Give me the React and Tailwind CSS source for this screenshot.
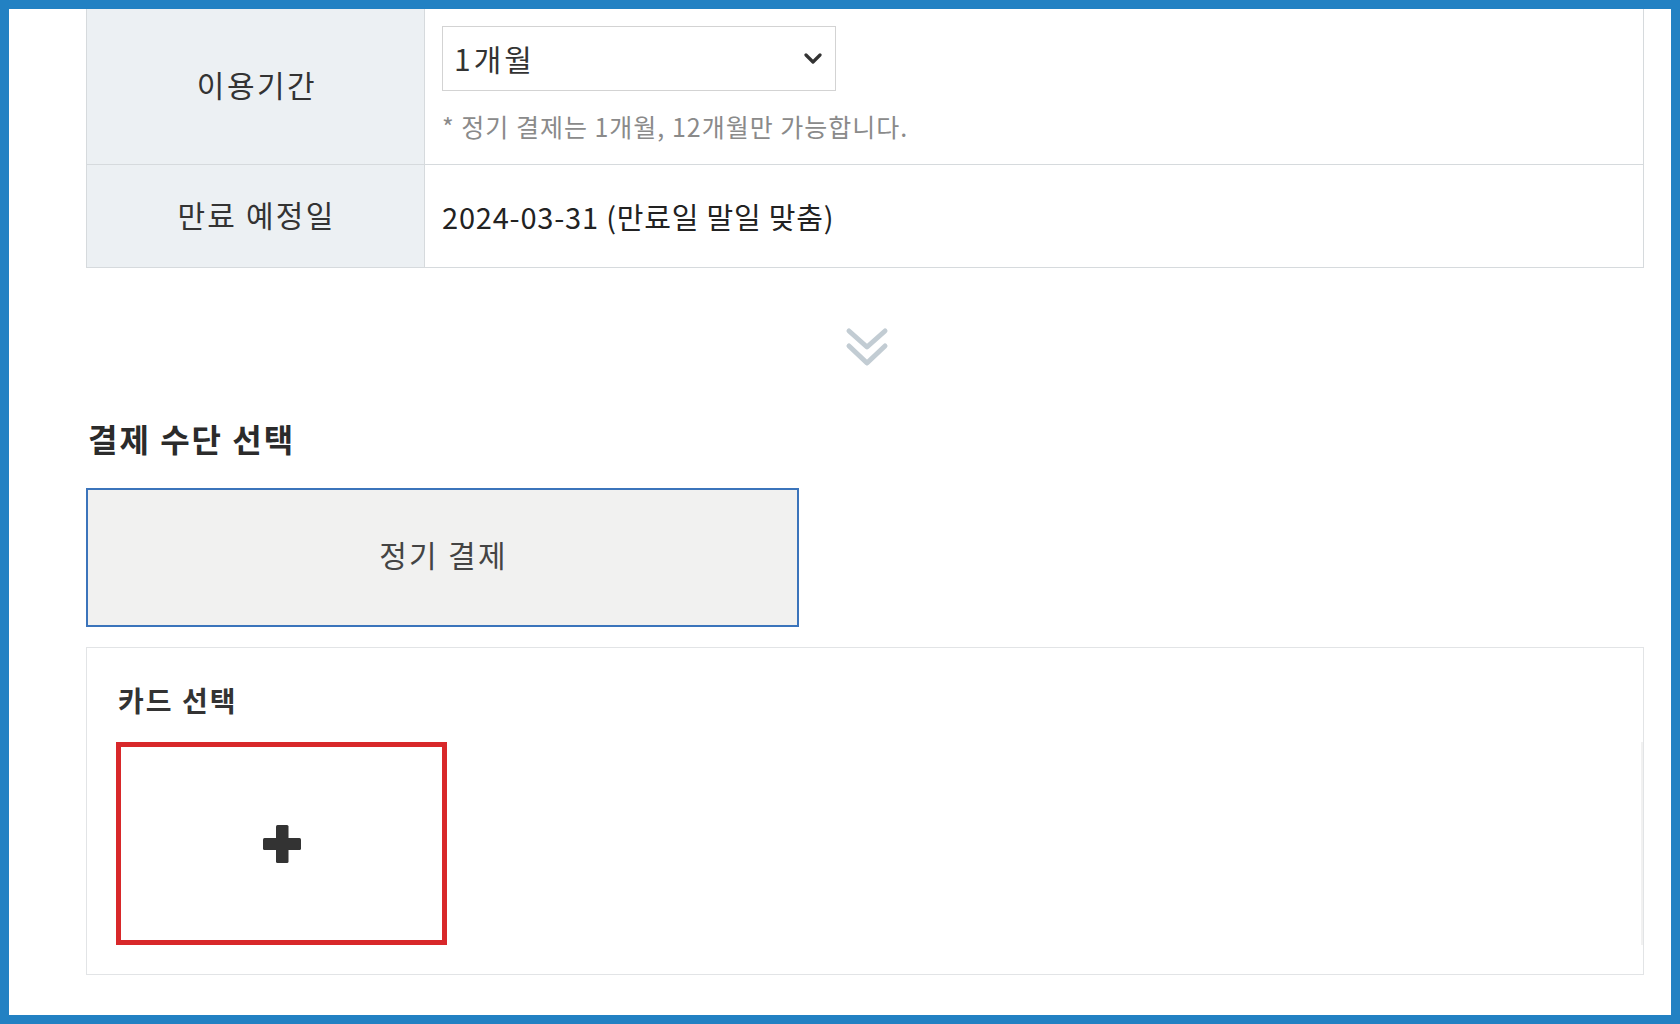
import React from "react";

const font = { fontFamily: '"Noto Sans CJK KR", "Noto Sans", sans-serif' };

const DoubleChevron = () => (
    <svg width="44" height="41" viewBox="0 0 44 41" fill="none" stroke="#c2ccd3" strokeWidth="5" strokeLinecap="round" strokeLinejoin="round">
        <polyline points="4,4 22,20 40,4" />
        <polyline points="4,19 22,36 40,19" />
    </svg>
);

const SelectArrow = () => (
    <svg width="18" height="11" viewBox="0 0 18 11" fill="none" stroke="#333" strokeWidth="3.2" strokeLinecap="round" strokeLinejoin="round">
        <polyline points="2,2 9,9 16,2" />
    </svg>
);

const Plus = () => (
    <svg width="38" height="38" viewBox="0 0 38 38" fill="#333">
        <rect x="13" y="0" width="12.5" height="38" rx="1.5" />
        <rect x="0" y="13" width="38" height="12" rx="1.5" />
    </svg>
);

const App = () => {
    return (
        <div className="h-[1024px] w-[1680px] overflow-hidden border-[9px] border-[#2281c3] bg-white" style={font}>
            <div className="flex flex-col pl-[77px] pr-[27px]">
                {/* 이용 정보 테이블 */}
                <div className="border-x border-[#d6dadd]">
                    <div className="flex h-[156px] border-b border-[#d6dadd]">
                        <div className="flex w-[338px] items-center justify-center border-r border-[#d6dadd] bg-[#ecf0f3] pb-[6px] pl-[3px] text-[30px] leading-none tracking-[2.5px] text-[#333]">
                            이용기간
                        </div>
                        <div className="flex-1 pl-[17px] pt-[17px]">
                            <div className="flex h-[65px] w-[394px] items-center justify-between border border-[#d3d3d3] pl-[11px] pr-[13px] text-[30px] leading-none tracking-[3px] text-[#333]">
                                <span className="pb-[2px]">1개월</span>
                                <SelectArrow />
                            </div>
                            <p className="mt-[23px] text-[25px] leading-none tracking-[1px] text-[#8a8a8a]">
                                * 정기 결제는 1개월, 12개월만 가능합니다.
                            </p>
                        </div>
                    </div>
                    <div className="flex h-[103px] border-b border-[#d6dadd]">
                        <div className="flex w-[338px] items-center justify-center border-r border-[#d6dadd] bg-[#ecf0f3] pb-[4px] pl-[2px] text-[30px] leading-none tracking-[2.2px] text-[#333]">
                            만료 예정일
                        </div>
                        <div className="flex flex-1 items-center pl-[17px] text-[29px] leading-none tracking-[0.8px] text-[#222]">
                            2024-03-31 (만료일 말일 맞춤)
                        </div>
                    </div>
                </div>

                <div className="mt-[59px] flex justify-center pl-[3px]">
                    <DoubleChevron />
                </div>

                {/* 결제 수단 */}
                <h2 className="mt-[54px] pl-[2px] text-[32px] font-bold leading-none tracking-[2px] text-[#2b2b2b]">결제 수단 선택</h2>

                <button className="mt-[34px] flex h-[139px] w-[713px] items-center justify-center border-2 border-[#3b74bb] bg-[#f1f1f0] pb-[7px] pl-[2px] text-[30px] leading-none tracking-[2.3px] text-[#444]">
                    정기 결제
                </button>

                <div className="mt-[20px] h-[328px] border border-[#e2e4e6] pl-[29px] pt-[38px]">
                    <h3 className="pl-[2px] text-[28px] font-semibold leading-none tracking-[2px] text-[#333]">카드 선택</h3>
                    <div className="mt-[28px] flex items-center border-r-2 border-[#f1f1f1]">
                        <div className="flex h-[203px] w-[331px] items-center justify-center border-[5px] border-[#d8282a] bg-white">
                            <Plus />
                        </div>
                    </div>
                </div>
            </div>
        </div>
    );
};

export default App;
